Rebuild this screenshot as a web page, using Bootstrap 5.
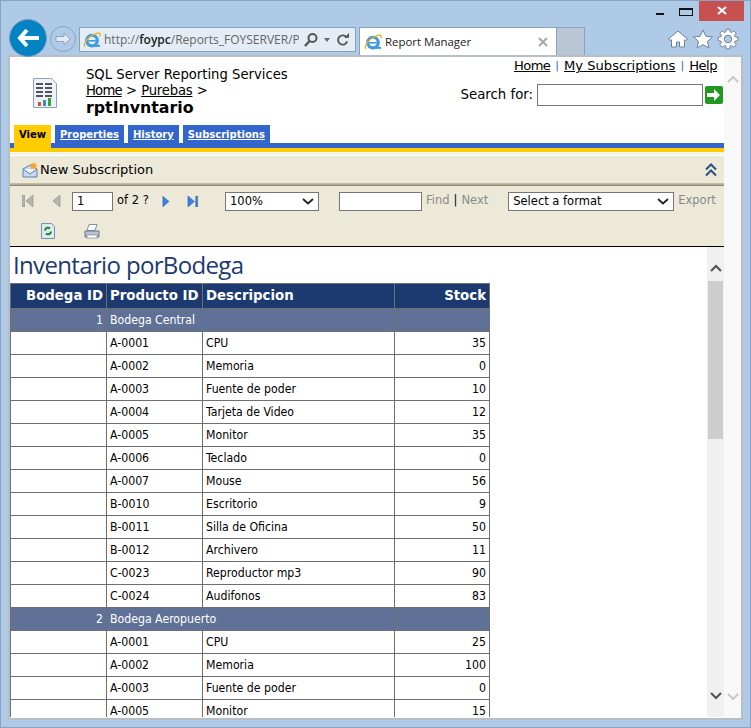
<!DOCTYPE html>
<html lang="en"><head><meta charset="utf-8"><title>Report Manager</title>
<link href="https://cdn.jsdelivr.net/npm/bootstrap@5.3.0/dist/css/bootstrap.min.css" rel="stylesheet">
<style>
html,body{margin:0;height:728px;overflow:hidden;background:#aecae6}
.win{width:751px;height:728px;border:1px solid #8aa3c0;background:#aecae6;overflow:hidden;font-family:"DejaVu Sans",sans-serif;color:#000}
.caption{height:20px;padding-right:6px}
.capbtn{width:26px;height:20px}
.closebtn{width:45px;height:20px;background:#c75050}
.chrome{height:34px;padding-left:8px;position:relative;z-index:2}
.back{width:38px;height:38px;border-radius:50%;background:#0382c4;border:1px solid #7d9ab8;margin-top:-2px;flex:none}
.fwd{width:26px;height:26px;border-radius:50%;border:1px solid #8ba6c2;margin-left:3px;margin-top:5px;flex:none}
.addr{width:277px;height:25px;margin-left:3px;margin-top:6px;background:#e4edf6;border:1px solid #8aa3bd;font:12px "Open Sans",sans-serif;color:#666;flex:none;padding-left:3px;white-space:nowrap;overflow:hidden}
.addr b{color:#222;font-weight:600}
.urltext{width:195px;overflow:hidden;margin-left:3px}
.tabb{width:198px;height:28px;margin-left:3px;margin-top:6px;background:#fff;border:1px solid #8aa3bd;border-bottom:0;flex:none;padding:0 4px;font:11.4px "Open Sans",sans-serif;color:#222}
.tabnew{width:28px;height:28px;margin-top:6px;background:#b9c6d5;border:1px solid #8aa3bd;border-left:0;border-bottom:0;flex:none}
.tools{margin-left:auto;padding-right:11px;margin-top:7px;gap:3px}
.page{margin-left:7px;width:735px;height:665px;border:2px solid #b9bec3;background:#fff}
.leftp{width:714px;flex:none;overflow:hidden}
.outersb{width:17px;background:#f8f8f8;flex:none}
.hdr{height:68px;position:relative}
.logo{width:76px;padding:21px 0 0 23px;flex:none}
.crumbs{padding-top:10px;font-size:13.2px;line-height:16px}
.crumbs a,.links a{color:#000;text-decoration:underline}
.crumbs a.homelink{letter-spacing:-.8px}
.crumbs a.purelink{letter-spacing:-.2px}
.links a.homelink{letter-spacing:-.6px}
.links a.helplink{letter-spacing:-.5px}
.rname{font-size:15.8px;font-weight:700;line-height:18px}
.rightc{margin-left:auto;padding-right:1px;text-align:right;font-size:13.3px}
.links{height:20px;padding-right:6px;line-height:18px;font-size:13.1px}
.links i{font-style:normal;color:#3366cc;font-size:11px;margin:0 5px;vertical-align:1px}
.searchrow{margin-top:7px}
.searchlabel{margin-right:1px}
.searchin{width:166px;height:22px;border:1px solid #767676;margin:0 2px 0 3px}
.tabsbar{height:18px;padding-left:4px;gap:4px;position:relative}
.rtab{height:18px;background:#3366cc;color:#fff;font-size:10px;font-weight:700;text-decoration:underline;padding:0 5px;line-height:19px;white-space:nowrap}
.rtab.act{height:23px;background:#ffcc00;color:#000;text-decoration:none;margin-bottom:-5px;position:relative;z-index:1;width:37px;padding:0;text-align:center}
.sblue{height:5px;background:#3366cc}
.syel{height:4px;background:#ffcc00}
.spale{height:4px;background:#f4f3ea;border-bottom:1px solid #fff}
.subbar{height:27px;background:#ece9d8;padding:0 7px 0 12px;font-size:13px}
.subedge{height:3px;background:linear-gradient(#c9c5b0,#aaa690 60%,#77756a)}
.tb{height:61px;background:#ece9d8;border-bottom:1px solid #000;font-size:11.5px}
.tb1{height:30px;padding:0 0 0 12px}
.tb2{height:30px;padding:0 0 0 31px}
.fld{height:19px;border:1px solid #767676;background:#fff;font-size:11.5px;padding:0 4px;line-height:17px;flex:none}
.dis{color:#8a8a8a}
.rep{height:470px;overflow:hidden;position:relative}
.repmain{width:697px;flex:none;overflow:hidden}
.reptitle{font:24px/36px "Open Sans",sans-serif;color:#1c3a70;padding-left:3px;height:36px;letter-spacing:-.65px}
.innersb{width:17px;background:#f0f0f0;flex:none}
.thumb{height:158px;width:15px;margin-left:1px;background:#cdcdcd}
.inv{width:479px;margin:0;table-layout:fixed;border-collapse:collapse;font:12.2px "DejaVu Sans Condensed","DejaVu Sans",sans-serif;color:#000}
.inv td,.inv th{border:1px solid #6f6f6f;padding:0 3px;height:23px;line-height:20px;white-space:nowrap;overflow:hidden}
.inv th{background:#1c3a70;color:#fff;font-weight:700;font-size:14.8px;height:25px;padding-bottom:2px}
.inv tr.grp td{background:#5f7196;color:#fff}
</style></head><body>
<div class="win">
 <div class="caption d-flex justify-content-end align-items-start">
  <div class="capbtn d-flex justify-content-center"><svg width="10" height="20"><rect x="1" y="12" width="8" height="2" fill="#111"/></svg></div>
  <div class="capbtn d-flex justify-content-center"><svg width="14" height="20"><rect x=".5" y="7.5" width="13" height="7" fill="none" stroke="#111"/><rect x="0" y="7" width="14" height="2" fill="#111"/></svg></div>
  <div class="closebtn d-flex justify-content-center align-items-center"><svg width="10" height="10"><path d="M1 1l8 7M9 1L1 8" stroke="#fff" stroke-width="2"/></svg></div>
 </div>
 <div class="chrome d-flex align-items-start">
  <div class="back d-flex align-items-center justify-content-center"><svg width="22" height="20" viewBox="0 0 22 20"><path d="M10 2L3 10l7 8M3 10h19" fill="none" stroke="#fff" stroke-width="4"/></svg></div>
  <div class="fwd d-flex align-items-center justify-content-center"><svg width="16" height="14" viewBox="0 0 16 14"><path d="M9 1l6 6-6 6V9.500H1v-5h8z" fill="#e2e9f1" stroke="#8ba6c2"/></svg></div>
  <div class="addr d-flex align-items-center">
   <svg width="18" height="18" viewBox="0 0 17 17"><circle cx="8.500" cy="9" r="6.500" fill="#3d9be0"/><circle cx="8.500" cy="9" r="3.500" fill="#e4edf6"/><rect x="5" y="8.500" width="7" height="1.500" fill="#3d9be0"/><path d="M11 13h5v2h-5z" fill="#3d9be0"/><path d="M2 15C-1 12 6 4 14 2c2-.5 3 1 1.500 3" fill="none" stroke="#f0b020" stroke-width="1.300"/></svg>
   <div class="urltext">http://<b>foypc</b>/Reports_FOYSERVER/Pag</div>
   <svg class="ms-1" width="16" height="16" viewBox="0 0 16 16"><circle cx="9.500" cy="6" r="4" fill="none" stroke="#555" stroke-width="2"/><path d="M6.500 9L2 14" stroke="#555" stroke-width="2.500"/></svg>
   <svg class="ms-1" width="8" height="6"><path d="M1 1h6L4 5z" fill="#666"/></svg>
   <svg style="margin-left:6px" width="12" height="13" viewBox="0 0 13 14"><path d="M10.500 5A5 5 0 1 0 11 9" fill="none" stroke="#555" stroke-width="2"/><path d="M8 5h5V0z" fill="#555"/></svg>
  </div>
  <div class="tabb d-flex align-items-center">
   <svg width="18" height="18" viewBox="0 0 17 17"><circle cx="8.500" cy="9" r="6.500" fill="#3d9be0"/><circle cx="8.500" cy="9" r="3.500" fill="#fff"/><rect x="5" y="8.500" width="7" height="1.500" fill="#3d9be0"/><path d="M11 13h5v2h-5z" fill="#3d9be0"/><path d="M2 15C-1 12 6 4 14 2c2-.5 3 1 1.500 3" fill="none" stroke="#f0b020" stroke-width="1.300"/></svg>
   <span style="margin-left:3px">Report Manager</span>
   <svg class="ms-auto me-1" width="10" height="10"><path d="M1 1l8 8M9 1l-8 8" stroke="#a9a9a9" stroke-width="2"/></svg>
  </div>
  <div class="tabnew"></div>
  <div class="tools d-flex align-items-center">
   <svg width="22" height="22" viewBox="0 0 22 22"><path d="M1.500 11L11 3l9.500 8-2 1.500-1-.8V19h-5v-5h-3v5h-5v-7.300l-1 .8z" fill="#fff" stroke="#6f8199"/></svg>
   <svg width="22" height="22" viewBox="0 0 22 22"><path d="M11 2l2.800 6.200 6.700.7-5 4.500 1.400 6.600L11 16.700 5.100 20l1.400-6.600-5-4.500 6.700-.7z" fill="#fff" stroke="#6f8199"/></svg>
   <svg width="22" height="22" viewBox="0 0 22 22"><path d="M8.930 3.790L9.260 1.150H12.740L13.070 3.790L14.640 4.440L16.740 2.810L19.190 5.260L17.560 7.360L18.210 8.930L20.850 9.260V12.740L18.210 13.070L17.560 14.640L19.190 16.740L16.740 19.190L14.640 17.560L13.070 18.210L12.740 20.850H9.260L8.930 18.210L7.360 17.560L5.260 19.190L2.810 16.740L4.440 14.640L3.790 13.070L1.150 12.740V9.260L3.790 8.930L4.440 7.360L2.810 5.260L5.260 2.810L7.360 4.440z" fill="#fff" stroke="#6f8199"/><circle cx="11" cy="11" r="3.800" fill="#aecae6" stroke="#6f8199"/></svg>
  </div>
 </div>
 <div class="page d-flex">
  <div class="leftp">
   <div class="hdr d-flex">
    <div class="logo"><svg width="24" height="30" viewBox="0 0 24 30"><path d="M.5.500h18l5 5v24H.5z" fill="#eef2f8" stroke="#8ea3bd"/><path d="M3 6h7M12 6h7M3 10h7M12 10h7M3 14h7M12 14h7M3 18h7M12 18h7" stroke="#222" stroke-width="1.500"/><rect x="5" y="24" width="3" height="4" fill="#d9541e"/><rect x="10" y="22" width="3" height="6" fill="#2f8fd6"/><rect x="15" y="20" width="3" height="8" fill="#3aa23a"/></svg></div>
    <div class="crumbs">
     <div>SQL Server Reporting Services</div>
     <div><a class="homelink" href="#">Home</a> &gt; <a class="purelink" href="#">Purebas</a> &gt;</div>
     <div class="rname">rptInvntario</div>
    </div>
    <div class="rightc">
     <div class="links"><a class="homelink" href="#">Home</a><i>|</i><a href="#">My Subscriptions</a><i>|</i><a class="helplink" href="#">Help</a></div>
     <div class="searchrow d-flex align-items-center justify-content-end">
      <span class="searchlabel">Search for:</span><input class="searchin" type="text" aria-label="Search">
      <svg width="18" height="18" viewBox="0 0 18 18"><rect width="18" height="18" rx="2" fill="#1f9a1f"/><path d="M2 7h7V3l6 6-6 6v-4H2z" fill="#fff"/></svg>
     </div>
    </div>
   </div>
   <div class="tabsbar d-flex">
    <div class="rtab act">View</div><div class="rtab">Properties</div><div class="rtab">History</div><div class="rtab">Subscriptions</div>
   </div>
   <div class="sblue"></div><div class="syel"></div><div class="spale"></div>
   <div class="subbar d-flex align-items-center">
    <svg width="16" height="16" viewBox="0 0 16 16"><path d="M1 7l7-4 7 4v8H1z" fill="#c9daf0" stroke="#5a7fb5"/><path d="M1 7l7 5 7-5" fill="#eef4fb" stroke="#5a7fb5"/><path d="M11.500 0l.9 2 2-.9-.7 2.100 2.100.8-2.100.8.7 2.100-2-.9-.9 2-.9-2-2 .9.700-2.100-2.100-.8 2.100-.8-.7-2.100 2 .9z" fill="#f5a623"/></svg>
    <span style="margin-left:2px">New Subscription</span>
    <svg class="ms-auto" width="12" height="14" viewBox="0 0 12 14"><path d="M1 6.500l5-5 5 5M1 12.500l5-5 5 5" fill="none" stroke="#2f4f80" stroke-width="2"/></svg>
   </div>
   <div class="subedge"></div>
   <div class="tb">
    <div class="tb1 d-flex align-items-center">
     <svg width="12" height="12" viewBox="0 0 12 12"><path d="M.500 0h2v12h-2zM11 0v12L4 6z" fill="#b5b5b0" stroke="#8c8c88" stroke-width=".6"/></svg>
     <svg style="margin-left:19px" width="8" height="12" viewBox="0 0 8 12"><path d="M7 0v12L0 6z" fill="#b5b5b0" stroke="#8c8c88" stroke-width=".6"/></svg>
     <div class="fld" style="margin-left:11px;width:41px">1</div>
     <span style="margin-left:4px;width:45px">of 2 ?</span>
     <svg width="7" height="11" viewBox="0 0 8 12"><path d="M1 0v12l7-6z" fill="#3f7fe0" stroke="#2a5cb0" stroke-width=".6"/></svg>
     <svg style="margin-left:18px" width="12" height="11" viewBox="0 0 12 12"><path d="M.5 0v12l7-6zM9 0h2v12H9z" fill="#3f7fe0" stroke="#2a5cb0" stroke-width=".6"/></svg>
     <div class="fld d-flex justify-content-between align-items-center" style="margin-left:26px;width:94px"><span>100%</span><svg width="12" height="7"><path d="M1 1l5 4.500L11 1" fill="none" stroke="#222" stroke-width="1.800"/></svg></div>
     <div class="fld" style="margin-left:20px;width:83px"></div>
     <span class="dis" style="margin-left:4px">Find</span><span class="mx-1">|</span><span class="dis">Next</span>
     <div class="fld d-flex justify-content-between align-items-center" style="margin-left:20px;width:166px"><span>Select a format</span><svg width="12" height="7"><path d="M1 1l5 4.500L11 1" fill="none" stroke="#222" stroke-width="1.800"/></svg></div>
     <span class="dis" style="margin-left:4px">Export</span>
    </div>
    <div class="tb2 d-flex align-items-center">
     <svg width="14" height="16" viewBox="0 0 14 16"><path d="M.5.500h10l3 3v12H.5z" fill="#dfe8f3" stroke="#7b8fa8"/><path d="M4 7.500a3 3 0 0 1 5-2M10 8.500a3 3 0 0 1-5 2" fill="none" stroke="#0f8a2a" stroke-width="2"/></svg>
     <svg style="margin-left:29px" width="16" height="15" viewBox="0 0 16 15"><path d="M5 .5h8l-2 6H3z" fill="#fff" stroke="#7b8fa8"/><path d="M1 7h14v6H1z" fill="#b9c4d2" stroke="#66768c"/><rect x="3" y="11" width="10" height="3" fill="#fff" stroke="#66768c" stroke-width=".6"/></svg>
    </div>
   </div>
   <div class="rep d-flex">
    <div class="repmain">
     <div class="reptitle">Inventario porBodega</div>
     <table class="inv">
      <colgroup><col style="width:96px"><col style="width:96px"><col style="width:192px"><col style="width:95px"></colgroup>
      <thead><tr><th class="text-end">Bodega ID</th><th>Producto ID</th><th>Descripcion</th><th class="text-end">Stock</th></tr></thead>
      <tbody>
      <tr class="grp"><td class="text-end">1</td><td colspan="2">Bodega Central</td><td></td></tr>
      <tr><td></td><td>A-0001</td><td>CPU</td><td class="text-end">35</td></tr>
      <tr><td></td><td>A-0002</td><td>Memoria</td><td class="text-end">0</td></tr>
      <tr><td></td><td>A-0003</td><td>Fuente de poder</td><td class="text-end">10</td></tr>
      <tr><td></td><td>A-0004</td><td>Tarjeta de Video</td><td class="text-end">12</td></tr>
      <tr><td></td><td>A-0005</td><td>Monitor</td><td class="text-end">35</td></tr>
      <tr><td></td><td>A-0006</td><td>Teclado</td><td class="text-end">0</td></tr>
      <tr><td></td><td>A-0007</td><td>Mouse</td><td class="text-end">56</td></tr>
      <tr><td></td><td>B-0010</td><td>Escritorio</td><td class="text-end">9</td></tr>
      <tr><td></td><td>B-0011</td><td>Silla de Oficina</td><td class="text-end">50</td></tr>
      <tr><td></td><td>B-0012</td><td>Archivero</td><td class="text-end">11</td></tr>
      <tr><td></td><td>C-0023</td><td>Reproductor mp3</td><td class="text-end">90</td></tr>
      <tr><td></td><td>C-0024</td><td>Audifonos</td><td class="text-end">83</td></tr>
      <tr class="grp"><td class="text-end">2</td><td colspan="2">Bodega Aeropuerto</td><td></td></tr>
      <tr><td></td><td>A-0001</td><td>CPU</td><td class="text-end">25</td></tr>
      <tr><td></td><td>A-0002</td><td>Memoria</td><td class="text-end">100</td></tr>
      <tr><td></td><td>A-0003</td><td>Fuente de poder</td><td class="text-end">0</td></tr>
      <tr><td></td><td>A-0005</td><td>Monitor</td><td class="text-end">15</td></tr>
      </tbody>
     </table>
    </div>
    <div class="innersb d-flex flex-column">
     <div class="d-flex justify-content-center" style="height:34px;padding-top:17px"><svg width="12" height="8"><path d="M1 7l5-5 5 5" fill="none" stroke="#555" stroke-width="2.200"/></svg></div>
     <div class="thumb"></div>
     <div class="d-flex justify-content-center mt-auto" style="padding-bottom:17px"><svg width="12" height="8"><path d="M1 1l5 5 5-5" fill="none" stroke="#555" stroke-width="2.200"/></svg></div>
    </div>
   </div>
  </div>
  <div class="outersb d-flex flex-column">
   <div class="d-flex justify-content-center" style="padding-top:18px"><svg width="12" height="8"><path d="M1 7l5-5 5 5" fill="none" stroke="#c8c8c8" stroke-width="2.200"/></svg></div>
   <div class="d-flex justify-content-center mt-auto" style="padding-bottom:17px"><svg width="12" height="8"><path d="M1 1l5 5 5-5" fill="none" stroke="#c8c8c8" stroke-width="2.200"/></svg></div>
  </div>
 </div>
</div>
</body></html>
